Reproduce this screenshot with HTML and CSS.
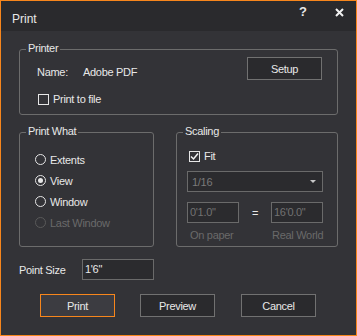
FILE: index.html
```html
<!DOCTYPE html>
<html lang="en">
<head>
    <meta charset="UTF-8">
    <meta name="viewport" content="width=device-width, initial-scale=1.0">
    <title>Print</title>
    <link rel="stylesheet" href="styles.css">
</head>
<body>
    <div class="window">
        <div class="titlebar">
            <span class="title">Print</span>
            <span class="help">?</span>
            <svg class="close" width="9" height="9" viewBox="0 0 9 9">
                <path d="M1 1 L8 8 M8 1 L1 8" stroke="#f2f2f2" stroke-width="2" fill="none" />
            </svg>
        </div>
        <div class="content">
            <div class="group printer">
                <span class="legend">Printer</span>
                <div class="printer-row">
                    <span class="name-label">Name:</span>
                    <span class="name-value">Adobe PDF</span>
                    <button class="button setup">Setup</button>
                </div>
                <label class="check-row to-file">
                    <span class="checkbox"></span>
                    Print to file
                </label>
            </div>

            <div class="groups">
                <div class="group what">
                    <span class="legend">Print What</span>
                    <label class="radio-row"><span class="radio"></span>Extents</label>
                    <label class="radio-row"><span class="radio selected"></span>View</label>
                    <label class="radio-row"><span class="radio"></span>Window</label>
                    <label class="radio-row disabled"><span class="radio"></span>Last Window</label>
                </div>
                <div class="group scaling">
                    <span class="legend">Scaling</span>
                    <label class="check-row fit">
                        <span class="checkbox">
                            <svg width="9" height="9" viewBox="0 0 9 9">
                                <path d="M1 4.5 L3.5 7 L8 1.5" stroke="#f2f2f2" stroke-width="1.5" fill="none" />
                            </svg>
                        </span>
                        Fit
                    </label>
                    <div class="select">
                        <span>1/16</span>
                        <span class="arrow"></span>
                    </div>
                    <div class="ratio-row">
                        <span class="field small">0'1.0"</span>
                        <span class="equals">=</span>
                        <span class="field small">16'0.0"</span>
                    </div>
                    <div class="ratio-labels">
                        <span class="paper">On paper</span>
                        <span class="world">Real World</span>
                    </div>
                </div>
            </div>

            <div class="point-row">
                <span class="point-label">Point Size</span>
                <span class="field point">1'6"</span>
            </div>

            <div class="actions">
                <button class="button primary">Print</button>
                <button class="button preview">Preview</button>
                <button class="button cancel">Cancel</button>
            </div>
        </div>
    </div>
</body>
</html>
```
FILE: styles.css
```css
body {
  margin: 0;
  background: #333337;
  font-family: "Liberation Sans", Arial, sans-serif;
  font-size: 11px;
  letter-spacing: -0.3px;
  color: #e8e8e8;
}

.window {
  width: 357px;
  height: 336px;
  box-sizing: border-box;
  border: 1px solid #f7861c;
  background: #333337;
  display: flex;
  flex-direction: column;
}

.titlebar {
  height: 30px;
  flex-shrink: 0;
  background: #2a2a2d;
  display: flex;
  align-items: flex-start;
}

.title {
  margin-top: 11px;
  padding-left: 11px;
  font-size: 12px;
  line-height: 14px;
  letter-spacing: 0;
}

.help {
  margin-left: auto;
  margin-top: 4px;
  font-size: 13px;
  font-weight: bold;
  line-height: 14px;
  letter-spacing: 0;
}

.close {
  margin: 7px 12px 0 28px;
}

.content {
  padding: 18px 18px 0 18px;
}

.group {
  position: relative;
  border: 1px solid #6c6c6c;
  border-radius: 3px;
}

/* label sitting on the top border */
.legend {
  position: absolute;
  top: -8px;
  left: 6px;
  padding: 0 2px;
  background: #333337;
  line-height: 13px;
}

.printer {
  padding: 7px 15px 8px 17px;
}

.printer-row {
  display: flex;
  align-items: flex-start;
}

.name-label {
  width: 46px;
  padding-top: 9px;
  line-height: 13px;
}

.name-value {
  padding-top: 9px;
  line-height: 13px;
}

.button {
  width: 75px;
  height: 23px;
  padding: 0;
  background: #2a2a2d;
  border: 1px solid #717171;
  color: #e8e8e8;
  font-family: inherit;
  font-size: 11px;
  letter-spacing: -0.3px;
}

.setup {
  margin-left: auto;
}

.check-row {
  display: flex;
  align-items: center;
  height: 13px;
  line-height: 13px;
}

.to-file {
  margin: 13px 0 0 1px;
}

.checkbox {
  width: 9px;
  height: 9px;
  border: 1px solid #e6e6e6;
  margin-right: 4px;
  display: flex;
  align-items: center;
  justify-content: center;
}

.groups {
  display: flex;
  margin-top: 17px;
  gap: 22px;
}

.what {
  width: 133px;
  padding: 16px 0 0 15px;
  box-sizing: border-box;
  width: 135px;
}

.radio-row {
  display: flex;
  align-items: center;
  height: 21px;
}

.radio {
  width: 9px;
  height: 9px;
  border: 1px solid #e6e6e6;
  border-radius: 50%;
  margin-right: 4px;
  display: flex;
  align-items: center;
  justify-content: center;
}

.radio.selected::after {
  content: "";
  width: 5px;
  height: 5px;
  border-radius: 50%;
  background: #e6e6e6;
}

.radio-row.disabled {
  color: #6a6a6a;
}

.radio-row.disabled .radio {
  border-color: #5a5a5a;
}

.scaling {
  flex: 1;
  padding: 17px 14px 4px 10px;
}

.fit {
  margin-left: 2px;
}

.select {
  margin-top: 8px;
  height: 21px;
  box-sizing: border-box;
  border: 1px solid #6a6a6a;
  background: #2b2b2e;
  color: #7a7a7a;
  display: flex;
  align-items: center;
  padding-left: 4px;
}

.arrow {
  margin-left: auto;
  margin-right: 6px;
  border-left: 3px solid transparent;
  border-right: 3px solid transparent;
  border-top: 3px solid #c8c8c8;
}

.ratio-row {
  margin-top: 10px;
  display: flex;
  justify-content: space-between;
  align-items: center;
}

.field {
  height: 21px;
  box-sizing: border-box;
  border: 1px solid #6a6a6a;
  background: #2b2b2e;
  line-height: 19px;
  padding-left: 2px;
}

.field.small {
  width: 52px;
  color: #727272;
}

.equals {
  color: #e8e8e8;
}

.ratio-labels {
  margin-top: 6px;
  display: flex;
  line-height: 13px;
  color: #6a6a6a;
}

.paper {
  padding-left: 3px;
}

.world {
  margin-left: auto;
  width: 51px;
  white-space: nowrap;
}

.point-row {
  margin-top: 12px;
  display: flex;
  align-items: center;
}

.point-label {
  width: 63px;
}

.field.point {
  width: 72px;
  color: #e8e8e8;
}

.actions {
  margin-top: 14px;
  display: flex;
}

.primary {
  margin-left: 21px;
  background: #3c3c41;
  border-color: #f7861c;
}

.preview {
  margin-left: 25px;
}

.cancel {
  margin-left: 26px;
}
```
